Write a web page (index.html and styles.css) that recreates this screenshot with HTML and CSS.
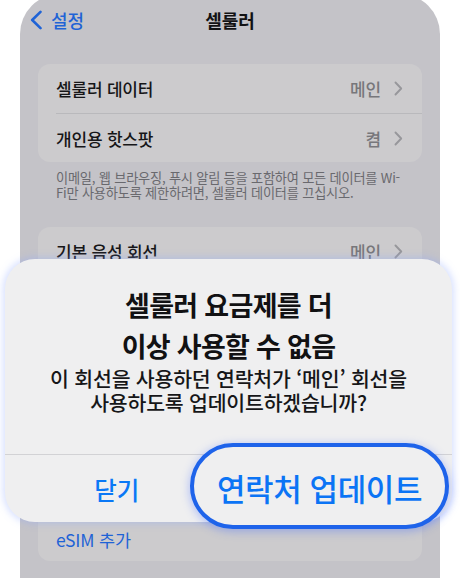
FILE: index.html
```html
<!DOCTYPE html>
<html lang="ko">
<head>
<meta charset="utf-8">
<title>셀룰러</title>
<link rel="stylesheet" href="styles.css">
</head>
<body>
<div class="page">
  <div class="screen">
    <div class="nav">
      <div class="back">
        <svg class="back-chev" width="14" height="20" viewBox="0 0 14 20"><path d="M11.5 1.8 L3.2 10 L11.5 18.2" fill="none" stroke="currentColor" stroke-width="2.6" stroke-linecap="round" stroke-linejoin="round"/></svg>
        <span>설정</span>
      </div>
      <div class="nav-title">셀룰러</div>
      <div></div>
    </div>

    <div class="card">
      <div class="row">
        <span class="label">셀룰러 데이터</span>
        <span class="value">메인</span>
        <svg class="chev" width="9" height="15" viewBox="0 0 9 15"><path d="M1.5 1.5 L7.2 7.5 L1.5 13.5" fill="none" stroke="currentColor" stroke-width="1.9" stroke-linecap="round" stroke-linejoin="round"/></svg>
      </div>
      <div class="row">
        <span class="label">개인용 핫스팟</span>
        <span class="value">켬</span>
        <svg class="chev" width="9" height="15" viewBox="0 0 9 15"><path d="M1.5 1.5 L7.2 7.5 L1.5 13.5" fill="none" stroke="currentColor" stroke-width="1.9" stroke-linecap="round" stroke-linejoin="round"/></svg>
      </div>
    </div>
    <p class="footer">이메일, 웹 브라우징, 푸시 알림 등을 포함하여 모든 데이터를 Wi-<br>Fi만 사용하도록 제한하려면, 셀룰러 데이터를 끄십시오.</p>

    <div class="card card2">
      <div class="row">
        <span class="label">기본 음성 회선</span>
        <span class="value">메인</span>
        <svg class="chev" width="9" height="15" viewBox="0 0 9 15"><path d="M1.5 1.5 L7.2 7.5 L1.5 13.5" fill="none" stroke="currentColor" stroke-width="1.9" stroke-linecap="round" stroke-linejoin="round"/></svg>
      </div>
      <div class="row"></div>
      <div class="row"></div>
      <div class="row"></div>
      <div class="row"></div>
      <div class="row"></div>
      <div class="row row-link"><span class="link">eSIM 추가</span></div>
    </div>
  </div>

  <div class="alert">
    <div class="alert-title">셀룰러 요금제를 더<br>이상 사용할 수 없음</div>
    <div class="alert-body">이 회선을 사용하던 연락처가 ‘메인’ 회선을<br>사용하도록 업데이트하겠습니까?</div>
    <div class="actions">
      <div class="action">닫기</div>
      <div class="action"></div>
    </div>
  </div>

  <div class="pill">연락처 업데이트</div>
</div>
</body>
</html>
```

FILE: styles.css
```css
* { box-sizing: border-box; }

html, body {
  margin: 0;
  padding: 0;
  background: #ffffff;
}

body {
  font-family: "Noto Sans CJK KR", "Noto Sans", sans-serif;
  color: #161618;
}

.page {
  position: relative;
  width: 460px;
  height: 578px;
  overflow: hidden;
}

.screen {
  margin: -6px 0 0 20px;
  width: 420px;
  height: 590px;
  padding-top: 6px;
  background: #c4c3c8;
  border-radius: 40px 40px 0 0;
  overflow: hidden;
}

.nav {
  height: 40px;
  display: grid;
  grid-template-columns: 1fr auto 1fr;
  align-items: center;
}

.back {
  display: flex;
  align-items: center;
  gap: 8px;
  padding-left: 9px;
  color: #1f63d6;
  font-size: 18px;
  line-height: 22px;
  font-weight: 500;
}

.back-chev { display: block; }

.nav-title {
  font-size: 18px;
  font-weight: 700;
  line-height: 22px;
  color: #121214;
}

.card {
  margin: 24px 18px 0;
  background: #cccbcd;
  border-radius: 12px;
  padding-left: 18px;
}

.row {
  height: 49px;
  display: flex;
  align-items: center;
  padding-right: 19px;
  border-top: 1px solid #b9b9bc;
  font-size: 17px;
  font-weight: 500;
  letter-spacing: -0.2px;
}

.row:first-child { border-top: none; }

.label {
  flex: 1;
  color: #161618;
}

.value {
  color: #77777b;
  margin-right: 13px;
}

.chev {
  display: block;
  color: #97979b;
}

.footer {
  margin: 0;
  padding: 8px 30px 0 36px;
  font-size: 13.2px;
  line-height: 15px;
  color: #69696e;
  letter-spacing: -0.2px;
  white-space: nowrap;
}

.card2 { margin-top: 27px; }

.row-link {
  height: 40px;
  padding-bottom: 5px;
  font-size: 17.5px;
  font-weight: 400;
}

.link { color: #1f63d6; }

.alert {
  position: absolute;
  left: 5px;
  top: 259px;
  width: 447px;
  height: 263px;
  border-radius: 30px;
  background: #efeff0;
  box-shadow: 0 0 7px 2px rgba(140, 165, 255, 0.35);
  display: flex;
  flex-direction: column;
  text-align: center;
}

.alert-title {
  padding-top: 25px;
  font-size: 27px;
  font-weight: 700;
  line-height: 41px;
  letter-spacing: -0.7px;
  color: #111113;
}

.alert-body {
  margin-top: 1px;
  font-size: 20.5px;
  font-weight: 500;
  line-height: 23.5px;
  letter-spacing: -0.2px;
  color: #161618;
}

.actions {
  margin-top: auto;
  height: 68px;
  border-top: 1.5px solid #d2d2d5;
  display: grid;
  grid-template-columns: 1fr 1fr;
  align-items: center;
}

.action {
  font-size: 24.5px;
  font-weight: 500;
  color: #0a78f6;
  line-height: 30px;
  padding-top: 2px;
}

.pill {
  position: absolute;
  left: 190px;
  top: 443px;
  width: 259px;
  height: 86px;
  border: 4px solid #1e63ea;
  border-radius: 43px;
  background: #efeff0;
  box-shadow: 0 2px 8px 1px rgba(70, 110, 255, 0.35);
  display: flex;
  align-items: center;
  justify-content: center;
  font-size: 31px;
  font-weight: 500;
  color: #0b74f5;
  letter-spacing: -0.4px;
  padding-top: 2px;
}
```
